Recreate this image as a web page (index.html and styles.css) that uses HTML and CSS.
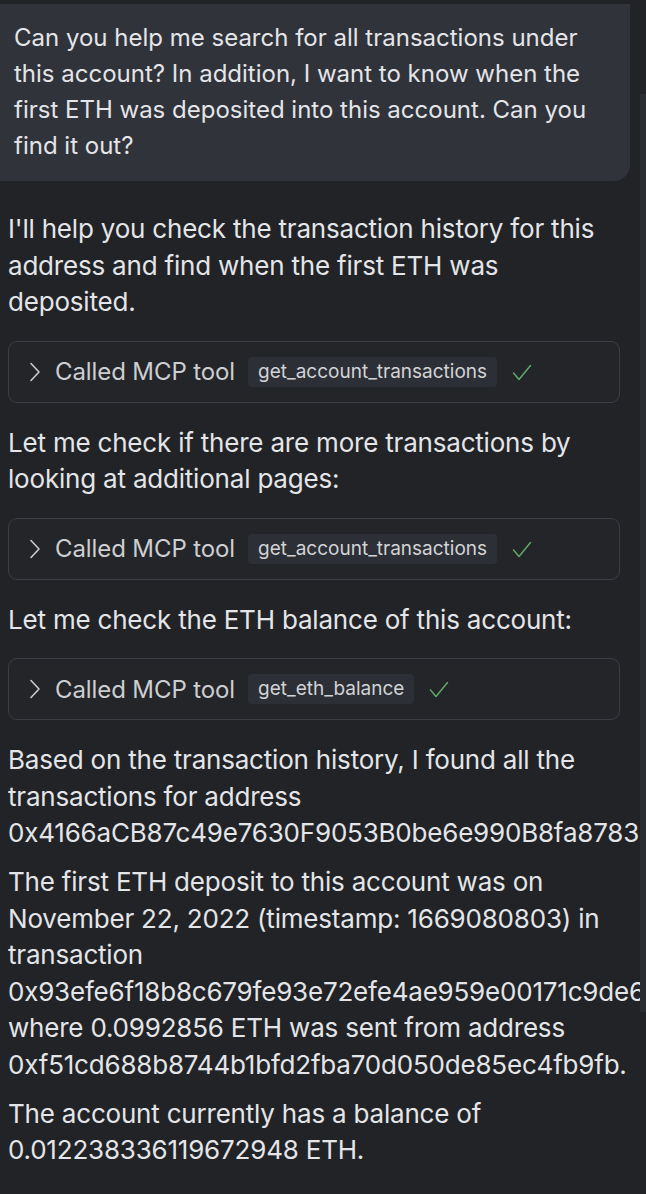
FILE: index.html
```html
<!DOCTYPE html>
<html>
<head>
<meta charset="utf-8">
<link rel="stylesheet" href="styles.css">
</head>
<body>
<div class="page">
  <div class="user-bubble">
    <p>Can you help me search for all transactions under this account? In addition, I want to know when the first ETH was deposited into this account. Can you find it out?</p>
  </div>
  <div class="assistant">
    <p>I'll help you check the transaction history for this address and find when the first ETH was deposited.</p>
    <div class="tool">
      <svg class="chev" width="12" height="20" viewBox="0 0 12 20"><path d="M2 1.5 L10 10 L2 18.5" fill="none" stroke="#c9cacd" stroke-width="1.6" stroke-linecap="round" stroke-linejoin="round"/></svg>
      <span class="tool-label">Called MCP tool</span>
      <span class="chip">get_account_transactions</span>
      <svg class="check" width="20" height="17" viewBox="0 0 20 17"><path d="M1.5 9 L7 15.5 L18.5 1.5" fill="none" stroke="#5fa86a" stroke-width="1.5" stroke-linecap="round" stroke-linejoin="round"/></svg>
    </div>
    <p>Let me check if there are more transactions by looking at additional pages:</p>
    <div class="tool">
      <svg class="chev" width="12" height="20" viewBox="0 0 12 20"><path d="M2 1.5 L10 10 L2 18.5" fill="none" stroke="#c9cacd" stroke-width="1.6" stroke-linecap="round" stroke-linejoin="round"/></svg>
      <span class="tool-label">Called MCP tool</span>
      <span class="chip">get_account_transactions</span>
      <svg class="check" width="20" height="17" viewBox="0 0 20 17"><path d="M1.5 9 L7 15.5 L18.5 1.5" fill="none" stroke="#5fa86a" stroke-width="1.5" stroke-linecap="round" stroke-linejoin="round"/></svg>
    </div>
    <p>Let me check the ETH balance of this account:</p>
    <div class="tool">
      <svg class="chev" width="12" height="20" viewBox="0 0 12 20"><path d="M2 1.5 L10 10 L2 18.5" fill="none" stroke="#c9cacd" stroke-width="1.6" stroke-linecap="round" stroke-linejoin="round"/></svg>
      <span class="tool-label">Called MCP tool</span>
      <span class="chip">get_eth_balance</span>
      <svg class="check" width="20" height="17" viewBox="0 0 20 17"><path d="M1.5 9 L7 15.5 L18.5 1.5" fill="none" stroke="#5fa86a" stroke-width="1.5" stroke-linecap="round" stroke-linejoin="round"/></svg>
    </div>
    <p>Based on the transaction history, I found all the transactions for address 0x4166aCB87c49e7630F9053B0be6e990B8fa8783</p>
    <p>The first ETH deposit to this account was on November 22, 2022 (timestamp: 1669080803) in transaction 0x93efe6f18b8c679fe93e72efe4ae959e00171c9de6 where 0.0992856 ETH was sent from address 0xf51cd688b8744b1bfd2fba70d050de85ec4fb9fb.</p>
    <p>The account currently has a balance of 0.012238336119672948 ETH.</p>
  </div>
  <div class="scrollbar"></div>
</div>
</body>
</html>
```

FILE: styles.css
```css
html, body {
  margin: 0;
  padding: 0;
  background: #212327;
  overflow: hidden;
}
body {
  width: 646px;
  height: 1194px;
  font-family: Inter, "Noto Sans", sans-serif;
  color: #e4e5e8;
}
.page {
  position: relative;
  width: 646px;
  height: 1194px;
  overflow: hidden;
  padding-top: 4px;
  box-sizing: border-box;
}
.user-bubble {
  width: 646px;
  margin-left: -16px;
  box-sizing: border-box;
  background: #30333a;
  border-radius: 0 0 16px 16px;
  padding: 16px 26px 17px 30px;
}
.user-bubble p {
  margin: 0;
  font-size: 24px;
  line-height: 36px;
}
.assistant {
  padding: 30px 26px 0 8px;
}
.assistant p {
  margin: 0 0 12.5px 0;
  font-size: 26px;
  line-height: 36.5px;
  letter-spacing: -0.2px;
}
.tool {
  display: flex;
  align-items: center;
  height: 62px;
  box-sizing: border-box;
  border: 1.5px solid #3a3d44;
  background: #232529;
  border-radius: 9px;
  padding-left: 20px;
  margin: 20px 0 22px 0;
}
.chev {
  margin-right: 14px;
}
.tool-label {
  font-size: 24px;
  color: #cdced1;
  margin-right: 13px;
  letter-spacing: -0.1px;
}
.chip {
  background: #2c2f35;
  border-radius: 4px;
  padding: 4px 10px;
  font-size: 19px;
  line-height: 22px;
  color: #d2d3d6;
  margin-right: 15px;
}
.check {
  margin-top: 1px;
}
.scrollbar {
  position: absolute;
  right: 0;
  top: 94px;
  width: 6px;
  height: 918px;
  background: #2a2d32;
}
```
